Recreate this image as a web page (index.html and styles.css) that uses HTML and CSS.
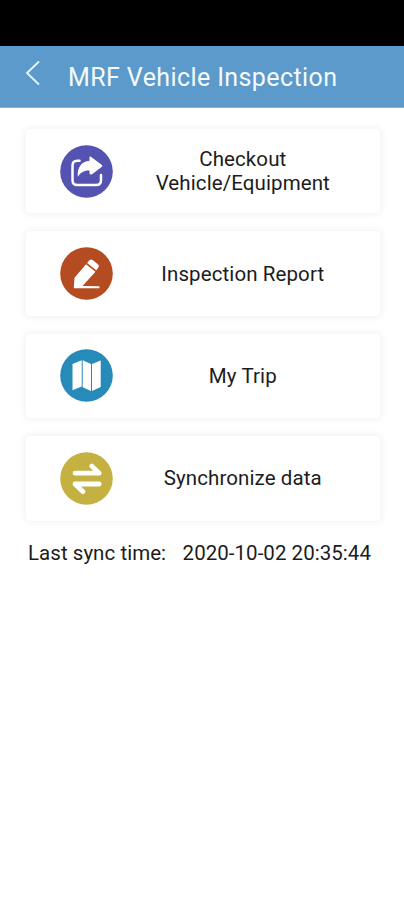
FILE: index.html
```html
<!DOCTYPE html>
<html lang="en">
<head>
<meta charset="utf-8">
<title>MRF Vehicle Inspection</title>
<link rel="stylesheet" href="styles.css">
</head>
<body>
<div class="status"></div>
<header class="bar">
  <svg class="back" viewBox="0 0 16 26"><path d="M14 1.5 2 13l12 11.5"/></svg>
  <h1 class="title">MRF Vehicle Inspection</h1>
</header>
<main class="menu">
  <a class="card">
    <svg class="icon" viewBox="0 0 53 53"><circle class="share" cx="26.5" cy="26.5" r="26.3"/><path class="line" d="M19.5 15.800h-2.200q-4.800 0-4.800 4.800v14.600q0 4.800 4.800 4.800h18.900q4.800 0 4.800-4.800v-5.200"/><path class="fill" d="M29.500 12.300q0-1.400 1.400-.5l11 8.100q1.100.9 0 1.800l-9.500 7.200q-2.900 1.500-2.900-.8v-2.600c-5.500 0-8.500 1.700-11.700 6.300-.7-9.500 3.700-15.500 11.700-16z"/></svg>
    <span class="label">Checkout<br>Vehicle/Equipment</span>
  </a>
  <a class="card">
    <svg class="icon" viewBox="0 0 53 53"><circle class="report" cx="26.5" cy="26.5" r="26.3"/><path class="fill" d="M26 17.300 35.500 24.800 22.500 38.900 39 39.200q1.600.9 0 2H14.200q-.5 0-.4-.7L14.500 30.800zM27.100 16.100l2.300-2.800q1.400-1.500 3.200-.2l5.300 4.200q1.800 1.500.5 3.200l-2.100 2.700z"/></svg>
    <span class="label">Inspection Report</span>
  </a>
  <a class="card">
    <svg class="icon" viewBox="0 0 53 53"><circle class="trip" cx="26.500" cy="26.500" r="26.300"/><path class="fill" d="M12.500 15 21.700 11.300V37.500L12.500 41.200zM22.700 11.300 31 15.100V42L22.700 38.200zM32 15.100 40.700 11.600V38L32 42z"/></svg>
    <span class="label">My Trip</span>
  </a>
  <a class="card">
    <svg class="icon" viewBox="0 0 53 53"><circle class="sync" cx="26.500" cy="26.500" r="26.300"/><path class="arrow" d="M15 21.200H39.200L31.700 14.100M39.200 32H15L23 39.700"/></svg>
    <span class="label">Synchronize data</span>
  </a>
</main>
<footer class="last"><span>Last sync time:</span><span class="stamp">2020-10-02 20:35:44</span></footer>
</body>
</html>
```

FILE: styles.css
```css
* { box-sizing: border-box; }
body { margin: 0; height: 900px; overflow: hidden; background: #fff; color: #1c1c1c; font-family: Roboto, "Liberation Sans", sans-serif; }
.status { height: 46px; background: #000; }
.bar { height: 62px; display: flex; align-items: flex-start; padding-left: 25px; background: #5b9aca; border-bottom: 1px solid #80b3d8; color: #f5faff; }
.back { width: 16px; height: 26px; margin-top: 14px; fill: none; stroke: #e3f3fe; stroke-width: 1.9; }
.title { margin: 16px 0 0 27px; font-size: 25px; line-height: 32px; font-weight: 400; letter-spacing: 0.4px; white-space: nowrap; }
.menu { display: grid; gap: 18px; padding: 21px 24px 0 25.5px; }
.card { display: flex; align-items: center; height: 84.4px; padding-left: 34.300px; background: #fff; border-radius: 4px; box-shadow: 0 0 6px 2px rgba(0,0,0,.05); }
.icon { width: 53px; height: 53px; flex: none; }
.label { width: 260px; text-align: center; font-size: 20.500px; line-height: 24px; letter-spacing: 0.1px; white-space: nowrap; }
.share { fill: #5553b2; }
.report { fill: #b44b21; }
.trip { fill: #278bb9; }
.sync { fill: #c5b042; }
.fill { fill: #fff; }
.line { fill: none; stroke: #fff; stroke-width: 2.5; stroke-linecap: round; }
.arrow { fill: none; stroke: #fff; stroke-width: 4.8; stroke-linecap: round; stroke-linejoin: round; }
.last { display: flex; gap: 16.500px; padding: 20px 0 0 28px; font-size: 20.500px; line-height: 24px; letter-spacing: 0.04px; white-space: nowrap; }
```
